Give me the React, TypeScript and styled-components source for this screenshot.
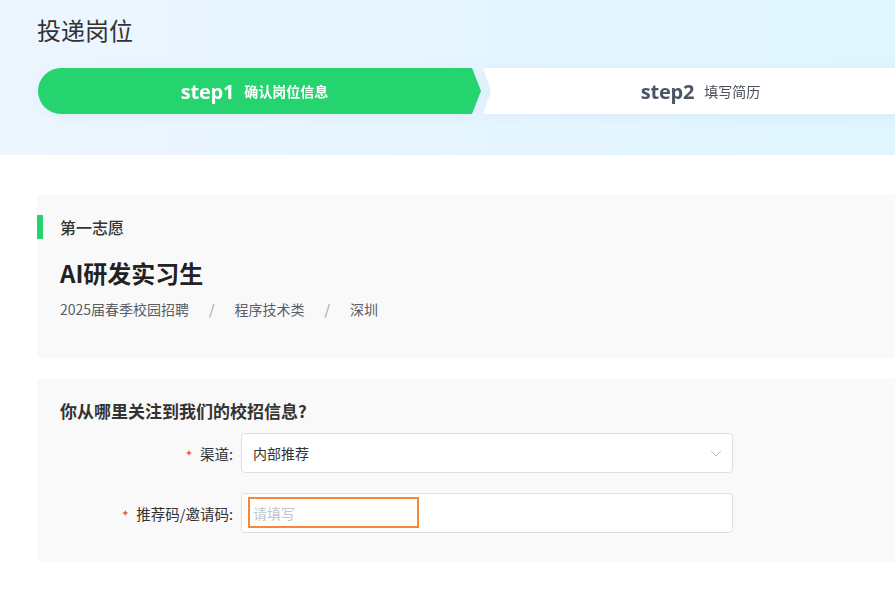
import React from "react";
import styled, { createGlobalStyle } from "styled-components";

const Global = createGlobalStyle`
  html, body { margin: 0; padding: 0; background: #fff; overflow: hidden; }
  body { font-family: "Noto Sans", "Noto Sans CJK SC", sans-serif; color: #333; }
  * { box-sizing: border-box; }
`;

const Page = styled.div`
  width: 895px;
  height: 598px;
  overflow: hidden;
  background: #fff;
`;

const Header = styled.header`
  height: 155px;
  background: linear-gradient(90deg, #edf6ff 0%, #e6f5ff 50%, #e0f5fe 100%);
  padding: 13px 0 0 37px;
`;

const Inner = styled.div`
  width: 881px;
`;

const Title = styled.h1`
  margin: 0;
  font-family: "Noto Sans CJK SC", sans-serif;
  font-size: 24px;
  font-weight: 400;
  line-height: 34px;
  color: #333;
`;

const Steps = styled.div`
  margin-top: 21px;
  margin-left: 1px;
  display: flex;
  gap: 2px;
  height: 46px;
  filter: drop-shadow(0 2px 6px rgba(160, 200, 230, 0.18));
`;

const Step = styled.div<{ $active?: boolean }>`
  display: flex;
  align-items: center;
  justify-content: center;
  gap: 10px;
  height: 100%;
  ${(p) =>
    p.$active
      ? `
    flex: 0 0 443px;
    background: #25d36f;
    border-radius: 23px 0 0 23px;
    clip-path: polygon(0 0, calc(100% - 9px) 0, 100% 50%, calc(100% - 9px) 100%, 0 100%);
    color: #fff;
    padding-right: 10px;
  `
      : `
    flex: 1;
    background: #fff;
    clip-path: polygon(0 0, 100% 0, 100% 100%, 0 100%, 8px 50%);
    color: #4b5366;
    padding-left: 0;
  `}
`;

const StepNo = styled.span`
  font-family: "Open Sans", "Noto Sans", sans-serif;
  font-size: 20px;
  font-weight: 700;
  letter-spacing: -0.2px;
`;

const StepLabel = styled.span<{ $active?: boolean }>`
  font-family: "Noto Sans CJK SC", sans-serif;
  font-size: 14px;
  font-weight: ${(p) => (p.$active ? 700 : 400)};
  color: ${(p) => (p.$active ? "#fff" : "#4a4f5a")};
`;

const Main = styled.main`
  padding: 40px 0 0 37px;
  display: flex;
  flex-direction: column;
  gap: 21px;
`;

const Card = styled.section<{ $pad: string }>`
  width: 881px;
  background: #f9f9f9;
  border-radius: 4px;
  padding: ${(p) => p.$pad};
`;

const Tag = styled.div`
  display: flex;
  align-items: center;
  height: 24px;
  font-family: "Noto Sans CJK SC", sans-serif;
  font-size: 16px;
  font-weight: 500;
  color: #333;
  &::before {
    content: "";
    width: 6px;
    height: 24px;
    background: #25d36f;
    margin-right: 17px;
  }
`;

const JobName = styled.h2`
  margin: 18px 0 0 23px;
  font-family: "Noto Sans CJK SC", sans-serif;
  font-size: 24px;
  font-weight: 700;
  line-height: 32px;
  color: #222;
`;

const Meta = styled.div`
  margin: 10px 0 0 23px;
  display: flex;
  align-items: center;
  gap: 20px;
  font-family: "Noto Sans CJK SC", sans-serif;
  font-size: 14px;
  line-height: 20px;
  color: #5a5e66;
`;

const Sep = styled.span`
  color: #9aa0ab;
`;

const Question = styled.h3`
  margin: 0;
  font-family: "Noto Sans CJK SC", sans-serif;
  font-size: 17px;
  font-weight: 700;
  line-height: 24px;
  color: #333;
`;

const Form = styled.div`
  margin-top: 10px;
  display: flex;
  flex-direction: column;
  gap: 20px;
`;

const Row = styled.div`
  display: flex;
  align-items: center;
`;

const Label = styled.label`
  width: 181px;
  padding-right: 8px;
  display: flex;
  align-items: center;
  justify-content: flex-end;
  font-family: "Noto Sans CJK SC", sans-serif;
  font-size: 14.5px;
  color: #333;
`;

const Required = styled.span`
  width: 6px;
  height: 6px;
  margin-right: 8px;
  background: #f25a3c;
  clip-path: polygon(50% 0, 65% 35%, 100% 50%, 65% 65%, 50% 100%, 35% 65%, 0 50%, 35% 35%);
`;

const Field = styled.div`
  position: relative;
  width: 492px;
  height: 40px;
  background: #fff;
  border: 1px solid #dcdfe6;
  border-radius: 4px;
  display: flex;
  align-items: center;
  padding: 0 11px;
  font-family: "Noto Sans CJK SC", sans-serif;
  font-size: 14px;
`;

const Value = styled.span`
  flex: 1;
  color: #333;
`;

const Placeholder = styled.span`
  flex: 1;
  color: #c0c4cc;
`;

const Chevron = styled.svg`
  width: 12px;
  height: 12px;
  margin-right: -1px;
`;

const Highlight = styled.div`
  position: absolute;
  left: 6px;
  top: 3px;
  width: 171px;
  height: 31px;
  border: 2px solid #f5883b;
  pointer-events: none;
`;

export default function App() {
  return (
    <Page>
      <Global />
      <Header>
        <Inner>
          <Title>投递岗位</Title>
          <Steps>
            <Step $active>
              <StepNo>step1</StepNo>
              <StepLabel $active>确认岗位信息</StepLabel>
            </Step>
            <Step>
              <StepNo>step2</StepNo>
              <StepLabel>填写简历</StepLabel>
            </Step>
          </Steps>
        </Inner>
      </Header>
      <Main>
        <Card $pad="20px 0 39px 0">
          <Tag>第一志愿</Tag>
          <JobName>AI研发实习生</JobName>
          <Meta>
            <span>2025届春季校园招聘</span>
            <Sep>/</Sep>
            <span>程序技术类</span>
            <Sep>/</Sep>
            <span>深圳</span>
          </Meta>
        </Card>
        <Card $pad="20px 0 29px 23px">
          <Question>你从哪里关注到我们的校招信息?</Question>
          <Form>
            <Row>
              <Label>
                <Required />
                渠道:
              </Label>
              <Field>
                <Value>内部推荐</Value>
                <Chevron viewBox="0 0 12 12" fill="none">
                  <path d="M1 4l5 5 5-5" stroke="#c0c4cc" strokeWidth="1" />
                </Chevron>
              </Field>
            </Row>
            <Row>
              <Label>
                <Required />
                推荐码/邀请码:
              </Label>
              <Field>
                <Placeholder>请填写</Placeholder>
                <Highlight />
              </Field>
            </Row>
          </Form>
        </Card>
      </Main>
    </Page>
  );
}
